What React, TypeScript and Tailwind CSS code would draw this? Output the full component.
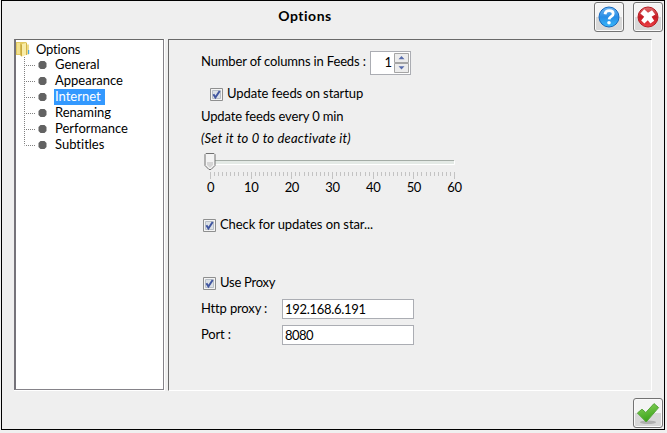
import React from "react";

const items = ["General", "Appearance", "Internet", "Renaming", "Performance", "Subtitles"];

function IconButton({ label, children }: { label: string; children: React.ReactNode }) {
  return (
    <button
      aria-label={label}
      className="flex h-[30px] w-[30px] shrink-0 items-center justify-center rounded-[3px] border border-[#737373] bg-linear-to-b from-[#f4f4f4] from-50% to-[#d8d8d8] to-50% shadow-[inset_0_0_0_1px_#fafafa]"
    >
      {children}
    </button>
  );
}

function HelpIcon() {
  return (
    <svg width="24" height="24" viewBox="0 0 24 24">
      <defs>
        <linearGradient id="blue" x1="0" y1="0" x2="0" y2="1">
          <stop offset="0" stopColor="#72b8f2" />
          <stop offset="0.5" stopColor="#278ce5" />
          <stop offset="1" stopColor="#38b8fb" />
        </linearGradient>
      </defs>
      <circle cx="12" cy="12" r="10" fill="url(#blue)" stroke="#1769bd" />
      <path d="M8 9.3C8.3 7 10 5.7 12.2 5.7c2.3 0 4 1.1 4 3 0 3-3.8 2.9-4.1 5.6" fill="none" stroke="#fff" strokeWidth="2.8" />
      <circle cx="12" cy="17.8" r="1.8" fill="#fff" />
    </svg>
  );
}

function CloseIcon() {
  return (
    <svg width="24" height="24" viewBox="0 0 24 24">
      <defs>
        <linearGradient id="red" x1="0" y1="0" x2="0" y2="1">
          <stop offset="0" stopColor="#e07070" />
          <stop offset="0.5" stopColor="#c51a22" />
          <stop offset="1" stopColor="#f04148" />
        </linearGradient>
      </defs>
      <circle cx="12" cy="12" r="10" fill="url(#red)" stroke="#b51d24" />
      <path d="M8.2 4.2l3.8 3.6 4-2.6 3.2 4.2-3.6 2.4 2.6 4-3.8 2.8-2.6-3.4-3.4 3.4-3.2-3.2 3-3.6-3.8-3.2z" fill="#fff" />
    </svg>
  );
}

function OkIcon() {
  return (
    <svg width="26" height="26" viewBox="0 0 26 26">
      <defs>
        <linearGradient id="green" x1="0" y1="0" x2="0.3" y2="1">
          <stop offset="0" stopColor="#8bd45e" />
          <stop offset="1" stopColor="#3aa318" />
        </linearGradient>
      </defs>
      <ellipse cx="13" cy="22.3" rx="8" ry="1.8" fill="#b0b0b0" />
      <path d="M2.4 13l4.6-3.8 3.8 3.3L19 3.6l4.6 4L11.2 22z" fill="url(#green)" stroke="#55a53a" strokeLinejoin="round" />
    </svg>
  );
}

function FolderIcon() {
  return (
    <svg width="14" height="16" viewBox="0 0 14 16" className="shrink-0">
      <path d="M0 1h10l1 1v12H0z" fill="#e3ca62" />
      <path d="M1 2h3v11H1z" fill="#f3e28f" />
      <path d="M4.5 3v12l1.5.5V4z" fill="#c9a93f" />
      <path d="M6 3l4-1v12l-4 1.5z" fill="#f8eca8" />
      <path d="M10 2h1v12h-1z" fill="#d3b348" />
      <path d="M11 3.5h2v10h-2z" fill="#eddb8c" />
      <path d="M12 9h1.2v4H12z" fill="#48a7db" />
    </svg>
  );
}

function Branch({ last }: { last: boolean }) {
  return (
    <svg width="30" height="16" viewBox="0 0 30 16" className="shrink-0">
      <path d={last ? "M.5 0V8.5" : "M.5 0V16"} stroke="#808080" strokeDasharray="1 1" />
      <path d="M2 8.5H11" stroke="#808080" strokeDasharray="1 1" />
      <path d="M16.5 4h4l2 2v4l-2 2h-4l-2-2V6z" fill="#626262" />
    </svg>
  );
}

function Check({ label, className }: { label: string; className: string }) {
  return (
    <div className={`flex h-4 items-center ${className}`}>
      <svg width="13" height="13" viewBox="0 0 13 13" className="mr-[4px] shrink-0">
        <path d="M.5.5h12v12H.5z" fill="#f4f4f4" stroke="#8e8f8f" />
        <path d="M2.5 2.5h8v8h-8z" fill="#dce1e6" stroke="#b8bfc7" />
        <path d="M3.4 6.2l2 3.3L9.7 3" fill="none" stroke="#4156a0" strokeWidth="2" />
      </svg>
      <span className="pb-[2px]">{label}</span>
    </div>
  );
}

function Slider() {
  return (
    <svg width="264" height="44" viewBox="0 0 264 44" className="ml-[3px] block shrink-0">
      <path d="M6 8.5H250" stroke="#a4aca6" />
      <path d="M6 10.5H250" stroke="#e4eae6" strokeWidth="3" />
      <path d="M6 12.5H250.5V9" fill="none" stroke="#fff" />
      {Array.from({ length: 61 }, (_, i) => (
        <path key={i} d={`M${Math.round((i * 244) / 60) + 6.5} 20v${i % 10 === 0 ? 7 : 4}`} stroke="#c3c3c3" />
      ))}
      <path d="M2 1.5h8l1 1v11l-4 4H5l-4-4v-11z" fill="#f3f3f3" stroke="#707070" />
      <path d="M3 10h6v3l-3 3-3-3z" fill="#d5d5d5" />
      {[0, 10, 20, 30, 40, 50, 60].map((n) => (
        <text key={n} x={6.5 + (n * 244) / 60} y="40" textAnchor="middle" className="text-[13px] tracking-[-0.4px]">
          {n}
        </text>
      ))}
    </svg>
  );
}

export default function App() {
  return (
    <div className="h-[433px] w-[667px] overflow-hidden bg-[#f0f0f0] pl-px font-['Lato','Liberation_Sans',sans-serif] text-[13px] leading-4 whitespace-nowrap text-black [font-variant-ligatures:none]">
      <main className="flex h-[430px] w-[664px] flex-col border border-black bg-[#efefef]">
        <header className="flex h-[38px] shrink-0 pt-px">
          <h1 className="ml-[14px] flex-1 pt-[5px] text-center text-[14px] leading-[17px] font-bold tracking-[0.5px]">Options</h1>
          <div className="flex gap-[9px] pr-px">
            <IconButton label="Help"><HelpIcon /></IconButton>
            <IconButton label="Close"><CloseIcon /></IconButton>
          </div>
        </header>
        <div className="flex h-[352px] shrink-0 pl-[12px]">
          <nav className="h-[352px] w-[151px] shrink-0 border-r border-b border-white">
            <div className="h-[351px] w-[150px] border border-l-2 border-[#858389] border-t-[#696969] border-l-[#75737a] bg-white pt-px">
              <div className="flex h-4 items-center">
                <FolderIcon />
                <span className="ml-[6px] pb-px tracking-[-0.2px]">Options</span>
              </div>
              {items.map((item, i) => (
                <div key={item} className="flex h-4 items-center pl-2">
                  <Branch last={i === items.length - 1} />
                  <span className={`h-4 px-px leading-[15px] ${item === "Internet" ? "w-[51px] bg-[#3399ff] text-white" : ""}`}>{item}</span>
                </div>
              ))}
            </div>
          </nav>
          <section className="ml-[3px] flex w-[484px] shrink-0 flex-col border border-t-[#696969] border-r-white border-b-white border-l-[#696969] pl-[32px] tracking-[-0.15px]">
            <div className="mt-[10px] flex h-[25px] shrink-0 items-center">
              <span className="w-[169px] pb-[3px]">Number of columns in Feeds :</span>
              <div className="flex h-[24px] w-[41px] border border-[#abadb3] bg-white p-px">
                <span className="flex-1 pt-px pr-[2px] text-right">1</span>
                <svg width="15" height="20" viewBox="0 0 15 20">
                  <path d="M.5.5h14v9H.5zM.5 10.5h14v9H.5z" fill="#ececec" stroke="#a5a5a5" />
                  <path d="M7.5 3L10.5 6.2h-6zM7.5 16.5L10.5 13.3h-6z" fill="#586cab" />
                </svg>
              </div>
            </div>
            <Check label="Update feeds on startup" className="mt-[11px] ml-[9px] shrink-0 tracking-[-0.08px]" />
            <div className="mt-[6px] shrink-0">Update feeds every 0 min</div>
            <div className="mt-[6px] shrink-0 tracking-[0.2px] italic">(Set it to 0 to deactivate it)</div>
            <div className="mt-[6px] h-[44px] shrink-0"><Slider /></div>
            <Check label="Check for updates on star..." className="mt-[21px] ml-[2px] shrink-0 tracking-[-0.08px]" />
            <Check label="Use Proxy" className="mt-[42px] ml-[2px] shrink-0 tracking-[-0.25px]" />
            <div className="mt-[8px] flex h-[20px] shrink-0 items-center">
              <label className="w-[81px] pb-[2px]" htmlFor="proxy">Http proxy :</label>
              <input id="proxy" defaultValue="192.168.6.191" className="h-[20px] w-[132px] border border-[#abadb3] bg-white px-[2px] pb-px tracking-[-0.3px]" />
            </div>
            <div className="mt-[6px] flex h-[20px] shrink-0 items-center">
              <label className="w-[81px] pb-[2px]" htmlFor="port">Port :</label>
              <input id="port" defaultValue="8080" className="h-[20px] w-[132px] border border-[#abadb3] bg-white px-[2px] pb-px tracking-[-0.5px]" />
            </div>
          </section>
        </div>
        <footer className="flex flex-1 items-end justify-end pr-px pb-px">
          <IconButton label="Apply"><OkIcon /></IconButton>
        </footer>
      </main>
    </div>
  );
}
